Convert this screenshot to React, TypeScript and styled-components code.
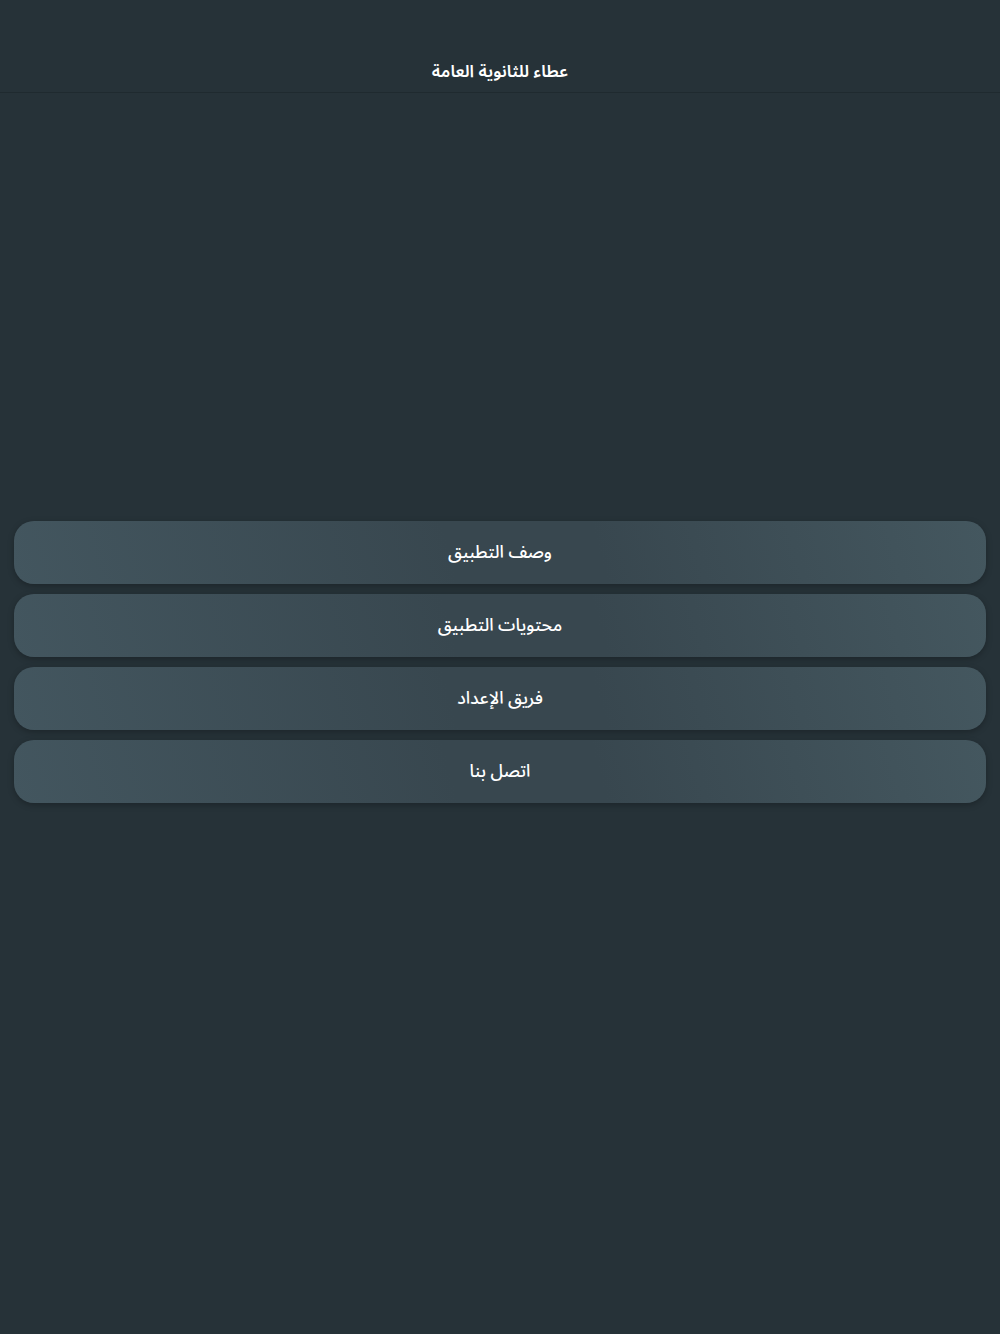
import React from "react";
import styled, { createGlobalStyle } from "styled-components";

const Global = createGlobalStyle`
  html, body { margin: 0; padding: 0; background: #263238; }
  body { font-family: "Noto Sans Arabic", "DejaVu Sans", "Noto Sans", sans-serif; color: #fff; }
`;

const Page = styled.div`
  min-height: 1334px;
  background: #263238;
  display: flex;
  flex-direction: column;
`;

const Header = styled.header`
  height: 93px;
  border-bottom: 1px solid #1f2a2f;
  display: flex;
  align-items: flex-end;
  justify-content: center;
  padding-bottom: 2px;
  box-sizing: border-box;
`;

const Title = styled.h1`
  margin: 0;
  font-size: 17px;
  font-weight: 600;
  color: #ffffff;
`;

const Menu = styled.nav`
  display: flex;
  flex-direction: column;
  gap: 10px;
  padding: 428px 14px 0;
`;

const MenuButton = styled.button`
  height: 63px;
  border: none;
  border-radius: 20px;
  background: linear-gradient(75deg, #43565f 0%, #38474f 45%, #38474f 60%, #44575f 100%);
  box-shadow: 0 2px 6px rgba(0, 0, 0, 0.25);
  color: #ffffff;
  font-family: inherit;
  font-size: 17.5px;
  font-weight: 500;
  direction: rtl;
  cursor: pointer;
`;

const items = ["وصف التطبيق", "محتويات التطبيق", "فريق الإعداد", "اتصل بنا"];

export default function App() {
  return (
    <Page>
      <Global />
      <Header>
        <Title dir="rtl">عطاء للثانوية العامة</Title>
      </Header>
      <Menu>
        {items.map((t) => (
          <MenuButton key={t}>{t}</MenuButton>
        ))}
      </Menu>
    </Page>
  );
}
